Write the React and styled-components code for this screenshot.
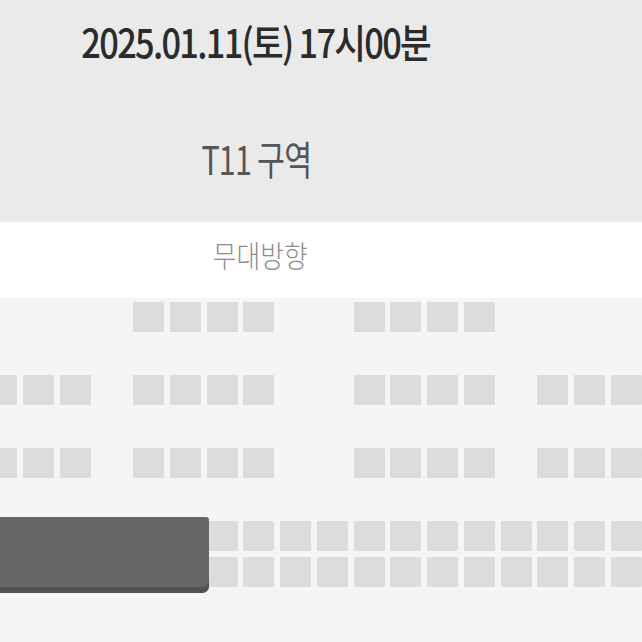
import React from 'react'
import styled, { createGlobalStyle } from 'styled-components'

const GlobalStyle = createGlobalStyle`
  html, body {
    margin: 0;
    padding: 0;
    background: #f5f5f5;
    overflow: hidden;
  }
  body {
    font-family: "Noto Sans CJK KR", "Noto Sans", sans-serif;
  }
`

const Page = styled.div`
  width: 642px;
  height: 642px;
  display: flex;
  flex-direction: column;
  overflow: hidden;
`

const Header = styled.header`
  height: 222px;
  background: #eaeaea;
  display: flex;
  flex-direction: column;
  align-items: center;
  padding: 21px 130px 0 0;
  box-sizing: border-box;
`

const Squeeze = styled.span`
  display: inline-block;
  white-space: nowrap;
  letter-spacing: ${p => p.$track || 0}px;
  transform: scaleX(${p => p.$scale});
`

const Title = styled.h1`
  margin: 0;
  font-size: 40px;
  line-height: 40px;
  font-weight: 500;
  color: #2b2b2b;
`

const Zone = styled.h2`
  margin: 77px 0 0;
  font-size: 40px;
  line-height: 40px;
  font-weight: 400;
  color: #555;
`

const Stage = styled.div`
  height: 76px;
  background: #fff;
  display: flex;
  align-items: center;
  justify-content: center;
  padding: 0 122px 12px 0;
  box-sizing: border-box;
  font-size: 30px;
  line-height: 30px;
  font-weight: 300;
  color: #8c8c8c;
`

const SeatArea = styled.section`
  flex: 1;
  background: #f5f5f5;
  padding-top: 4px;
  display: flex;
  flex-direction: column;
  gap: 43px;
`

const Block = styled.div`
  position: relative;
  display: flex;
  flex-direction: column;
  gap: ${p => p.$gap}px;
`

const Row = styled.div`
  display: grid;
  grid-template-columns: repeat(18, 31px);
  column-gap: 5.76px;
  margin-left: -14px;
`

const Seat = styled.div`
  height: 30px;
  background: ${p => (p.$empty ? 'transparent' : '#dcdcdc')};
  border-radius: 1px;
`

const Taken = styled.div`
  position: absolute;
  left: 0;
  top: -4px;
  width: 209px;
  height: 76px;
  background: #676767;
  border-radius: 0 3px 7px 0;
  box-shadow: inset 0 -6px 0 #515151;
`

const upper = [
  '....XXXX..XXXX....',
  'XXX.XXXX..XXXX.XXX',
  'XXX.XXXX..XXXX.XXX',
]
const lower = ['XXXXXXXXXXXXXXXXXX', 'XXXXXXXXXXXXXXXXXX']

const SeatRow = ({ pattern }) => (
  <Row>
    {pattern.split('').map((c, i) => (
      <Seat key={i} $empty={c !== 'X'} />
    ))}
  </Row>
)

export default function App() {
  return (
    <Page>
      <GlobalStyle />
      <Header>
        <Title>
          <Squeeze $scale={0.86} $track={-2}>2025.01.11(토) 17시00분</Squeeze>
        </Title>
        <Zone>
          <Squeeze $scale={0.76} $track={-1}>T11 구역</Squeeze>
        </Zone>
      </Header>
      <Stage>
        <Squeeze $scale={0.86}>무대방향</Squeeze>
      </Stage>
      <SeatArea>
        <Block $gap={43}>
          {upper.map((p, i) => (
            <SeatRow key={i} pattern={p} />
          ))}
        </Block>
        <Block $gap={6}>
          {lower.map((p, i) => (
            <SeatRow key={i} pattern={p} />
          ))}
          <Taken />
        </Block>
      </SeatArea>
    </Page>
  )
}
